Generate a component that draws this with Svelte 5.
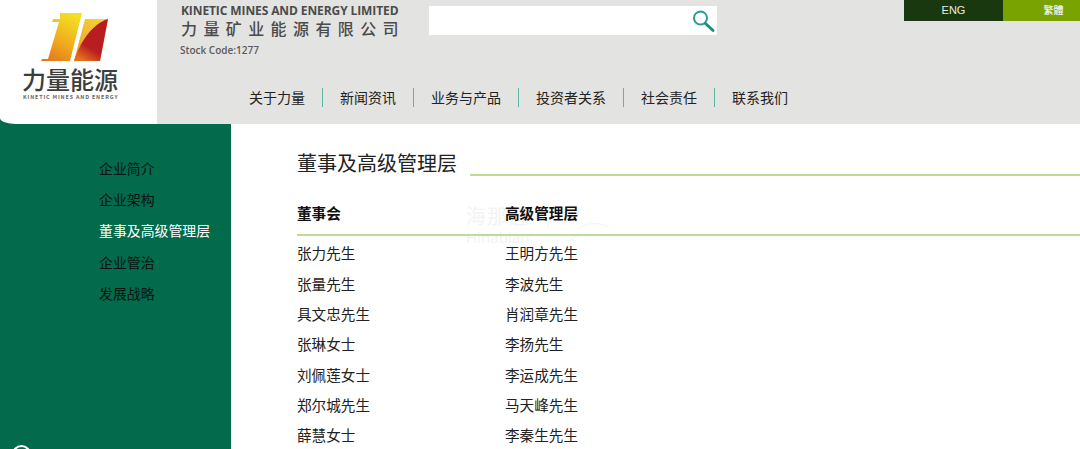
<script>
    const nav = ['关于力量', '新闻资讯', '业务与产品', '投资者关系', '社会责任', '联系我们'];
    const side = ['企业简介', '企业架构', '董事及高级管理层', '企业管治', '发展战略'];
    const board = ['张力先生', '张量先生', '具文忠先生', '张琳女士', '刘佩莲女士', '郑尔城先生', '薛慧女士'];
    const managers = ['王明方先生', '李波先生', '肖润章先生', '李扬先生', '李运成先生', '马天峰先生', '李秦生先生'];
</script>

<div class="page">
    <header class="header">
        <div class="logo-wrap">
            <div class="logo">
                <svg class="mark" width="70" height="50" viewBox="0 0 70 50" aria-hidden="true">
                    <defs>
                        <linearGradient id="one" x1="0.7" y1="0" x2="0.25" y2="1">
                            <stop offset="0" stop-color="#f3e024" />
                            <stop offset="0.55" stop-color="#f0ae1e" />
                            <stop offset="1" stop-color="#e57a1c" />
                        </linearGradient>
                        <linearGradient id="two" x1="0.8" y1="0" x2="0.1" y2="1">
                            <stop offset="0" stop-color="#f6d23a" />
                            <stop offset="1" stop-color="#ee9a20" />
                        </linearGradient>
                        <linearGradient id="three" x1="0.7" y1="0.2" x2="0.3" y2="1">
                            <stop offset="0.6" stop-color="#b81d22" />
                            <stop offset="1" stop-color="#e5701c" />
                        </linearGradient>
                    </defs>
                    <path d="M20 1H42L30 49H1L2 47H8L19 10H12L13 7H20Z" fill="url(#one)" />
                    <path d="M45 7H68L60 49H34Z" fill="url(#two)" />
                    <path d="M68 7C52 12 40 30 34 49H60Z" fill="url(#three)" />
                </svg>
                <div class="logo-cn">力量能源</div>
                <div class="logo-en">KINETIC MINES AND ENERGY</div>
            </div>
        </div>

        <div class="head-main">
            <div class="head-top">
                <div class="company">
                    <div class="co-en">KINETIC MINES AND ENERGY LIMITED</div>
                    <div class="co-cn">力量矿业能源有限公司</div>
                    <div class="co-stock">Stock Code:1277</div>
                </div>
                <div class="search">
                    <svg width="26" height="26" viewBox="0 0 26 26" aria-hidden="true">
                        <circle cx="10.5" cy="10" r="6.5" fill="none" stroke="#2a9d8f" stroke-width="2" />
                        <path d="M15.5 15.5L23 22.5" stroke="#1f8c7c" stroke-width="3" stroke-linecap="round" />
                    </svg>
                </div>
                <div class="lang">
                    <span class="lang-en">ENG</span>
                    <span class="lang-tc">繁體</span>
                </div>
            </div>
            <nav class="nav">
                {#each nav as item}
                    <span class="nav-item">{item}</span>
                {/each}
            </nav>
        </div>
    </header>

    <div class="body">
        <aside class="sidebar">
            {#each side as item, i}
                <div class="side-item" class:active={i === 2}>{item}</div>
            {/each}
            <span class="ring"></span>
        </aside>

        <main class="content">
            <div class="watermark">
                <div class="wm-cn">海那边</div>
                <div class="wm-en">Hinabian</div>
                <svg class="wm-swoosh" width="70" height="42" viewBox="0 0 70 42" aria-hidden="true">
                    <path d="M6 24C10 8 26 0 36 2C42 4 36 10 32 18M38 24C48 18 60 18 68 24M24 36C30 38 34 34 38 28" fill="none" stroke="#f3f3f3" stroke-width="1" />
                </svg>
            </div>
            <div class="title-row">
                <h1>董事及高级管理层</h1>
                <div class="title-line"></div>
            </div>
            <div class="cols-head">
                <div class="col">董事会</div>
                <div class="col">高级管理层</div>
            </div>
            <div class="cols">
                <ul class="col">
                    {#each board as name}
                        <li>{name}</li>
                    {/each}
                </ul>
                <ul class="col">
                    {#each managers as name}
                        <li>{name}</li>
                    {/each}
                </ul>
            </div>
        </main>
    </div>
</div>

<style>
    :global(body) {
        margin: 0;
        font-family: "Noto Sans CJK SC", "Noto Sans", sans-serif;
    }

    .page {
        height: 100vh;
        overflow: hidden;
        background: #fff;
    }

    .header {
        display: flex;
        height: 124px;
        background: #e3e3e1;
    }

    .logo-wrap {
        width: 157px;
        flex: none;
        background: linear-gradient(to top, #036a4c 10px, #fff 10px);
    }

    .logo {
        height: 124px;
        background: #fff;
        border-bottom-left-radius: 16px 6px;
        display: flex;
        flex-direction: column;
        align-items: flex-start;
        color: #3d3d3d;
    }

    .mark {
        margin-top: 12px;
        margin-left: 40px;
        flex: none;
    }

    .logo-cn {
        font-size: 24px;
        line-height: 30px;
        font-weight: 500;
        margin-top: 2px;
        margin-left: 22px;
    }

    .logo-en {
        font-size: 5.4px;
        line-height: 7px;
        font-weight: 700;
        letter-spacing: 0.85px;
        margin-left: 23px;
        color: #666;
        white-space: nowrap;
    }

    .head-main {
        flex: 1;
        display: flex;
        flex-direction: column;
        justify-content: space-between;
    }

    .head-top {
        display: flex;
        align-items: flex-start;
    }

    .company {
        width: 272px;
        padding-left: 24px;
        box-sizing: border-box;
        flex: none;
        color: #4b4b4b;
    }

    .co-en {
        font-family: "Open Sans", sans-serif;
        font-size: 12px;
        line-height: 13px;
        font-weight: 700;
        margin-top: 4px;
        white-space: nowrap;
        letter-spacing: -0.1px;
    }

    .co-cn {
        font-size: 16px;
        line-height: 20px;
        letter-spacing: 6.4px;
        margin-top: 1px;
        font-weight: 500;
        white-space: nowrap;
    }

    .co-stock {
        font-family: "Open Sans", sans-serif;
        font-size: 10px;
        line-height: 14px;
        margin-top: 5px;
        margin-left: -1px;
        font-weight: 600;
        color: #5c5c5c;
    }

    .search {
        width: 288px;
        height: 29px;
        margin-top: 6px;
        background: #fff;
        flex: none;
        display: flex;
        justify-content: flex-end;
        align-items: center;
        padding-right: 1px;
        box-sizing: border-box;
    }

    .lang {
        margin-left: auto;
        display: flex;
        height: 21px;
        font-family: "Liberation Sans", sans-serif;
        font-size: 11px;
        line-height: 20px;
        color: #e8eee0;
        text-align: center;
    }

    .lang-en {
        width: 99px;
        background: #1a3810;
    }

    .lang-tc {
        width: 53px;
        padding-left: 24px;
        background: #78a300;
        font-family: "Noto Sans CJK TC", sans-serif;
        font-size: 10px;
        font-weight: 700;
    }

    .nav {
        display: flex;
        align-items: center;
        padding-left: 75px;
        margin-bottom: 17px;
    }

    .nav-item {
        font-size: 14px;
        line-height: 19px;
        padding: 0 17px;
        color: #222;
        border-left: 1px solid #5fb5a5;
        white-space: nowrap;
    }

    .nav-item:first-child {
        border-left: none;
    }

    .body {
        display: flex;
        height: 325px;
    }

    .sidebar {
        position: relative;
        width: 231px;
        flex: none;
        background: #036a4c;
        padding: 29px 0 0 99px;
        box-sizing: border-box;
    }

    .side-item {
        font-size: 13.9px;
        line-height: 31.2px;
        color: #06150f;
        white-space: nowrap;
    }

    .side-item.active {
        color: #fff;
    }

    .ring {
        position: absolute;
        left: 12px;
        top: 321px;
        width: 15px;
        height: 15px;
        border: 2px solid #fff;
        border-radius: 50%;
    }

    .content {
        position: relative;
        flex: 1;
        padding: 25px 0 0 66px;
        color: #222;
    }

    .title-row {
        position: relative;
        display: flex;
        align-items: flex-end;
        gap: 13px;
    }

    h1 {
        margin: 0;
        font-size: 20px;
        line-height: 28px;
        font-weight: 400;
        white-space: nowrap;
    }

    .title-line {
        flex: 1;
        height: 2px;
        background: #c0db92;
        margin-bottom: 1px;
    }

    .cols-head {
        position: relative;
        display: flex;
        margin-top: 25px;
        padding-bottom: 10px;
        border-bottom: 2px solid #c0db92;
        font-weight: 700;
        font-size: 14.6px;
        line-height: 22px;
        color: #111;
    }

    .col {
        width: 208px;
    }

    .cols {
        display: flex;
    }

    ul {
        list-style: none;
        margin: 2.4px 0 0;
        padding: 0;
    }

    li {
        font-size: 14.6px;
        line-height: 30.35px;
    }

    .watermark {
        position: absolute;
        left: 235px;
        top: 80px;
        color: #f3f3f3;
    }

    .wm-cn {
        font-size: 20px;
        line-height: 24px;
        letter-spacing: 1px;
    }

    .wm-en {
        font-family: "Noto Sans", sans-serif;
        font-size: 15px;
        line-height: 18px;
    }

    .wm-swoosh {
        position: absolute;
        left: 75px;
        top: 0;
    }
</style>
